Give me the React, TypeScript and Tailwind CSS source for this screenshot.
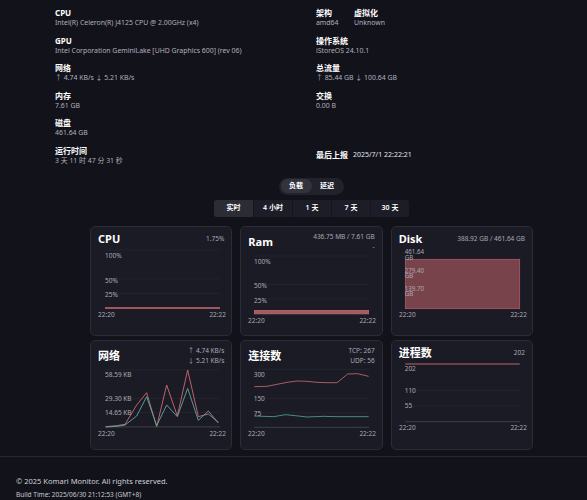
import React from "react";

const LBL = "#a9a9b3";
const GRID = "#2a2a36";
const RED = "#cf6a70";
const TEAL = "#5fa8a2";

type T = { x: number; y: number; s: string; anchor?: "start" | "end" | "middle" };
function Txt({ x, y, s, anchor = "start" }: T) {
  return (
    <text x={x} y={y} fontSize={6.5} fill={LBL} dominantBaseline="central" textAnchor={anchor}>
      {s}
    </text>
  );
}

function Txt2({ x, y, a, b }: { x: number; y: number; a: string; b: string }) {
  return (
    <text x={x} y={y} fontSize={6.2} fill={LBL} dominantBaseline="central">
      <tspan x={x} y={y}>{a}</tspan>
      <tspan x={x} y={y + 5.2}>{b}</tspan>
    </text>
  );
}

function XLabels({ y }: { y: number }) {
  return (
    <>
      <Txt x={0} y={y} s="22:20" />
      <Txt x={128} y={y} s="22:22" anchor="end" />
    </>
  );
}

function Grid({ ys, x1 = 7, x2 = 122 }: { ys: number[]; x1?: number; x2?: number }) {
  return (
    <>
      {ys.map((y, i) => (
        <line key={i} x1={x1} x2={x2} y1={y} y2={y} stroke={GRID} strokeWidth={0.6} />
      ))}
    </>
  );
}

function pts(a: number[][]) {
  return a.map((p) => p.join(",")).join(" ");
}

function Card({
  title,
  right,
  headerH,
  children,
}: {
  title: string;
  right: React.ReactNode;
  headerH: string;
  children: React.ReactNode;
}) {
  return (
    <div className="h-[110px] rounded-[5px] border border-[#2c2c38] bg-[#1b1b25] px-[7px] pt-[4px]">
      <div className={`flex items-center justify-between ${headerH}`}>
        <span className="text-[11px] font-bold leading-[14px] text-white">{title}</span>
        <div className="text-right text-[6.5px] leading-[10px] text-[#a9a9b3]">{right}</div>
      </div>
      <svg width={128} height={72} className="block overflow-visible">
        {children}
      </svg>
    </div>
  );
}

function InfoItem({ label, value }: { label: string; value: string }) {
  return (
    <div>
      <div className="text-[8px] font-bold leading-[10px] text-white">{label}</div>
      <div className="text-[6.9px] leading-[9px] text-[#b0b0ba]">{value}</div>
    </div>
  );
}

export default function App() {
  const netRed = [
    [7.67, 58.67], [18.67, 57.67], [27, 56.33], [38.67, 37], [48.67, 24.67], [58.67, 58.67],
    [68.67, 17], [79.33, 48], [89.67, 2], [100.33, 48.67], [110.33, 46], [120.33, 54.33],
  ];
  const netTeal = [
    [7.67, 59], [18.67, 58.33], [27, 57], [38.67, 48], [48.67, 28.67], [58.67, 57.67],
    [68.67, 37], [79.33, 48.67], [89.67, 20.33], [100.33, 52.33], [110.33, 43], [120.33, 55],
  ];
  const connRed = [
    [6.33, 18.67], [19, 18.33], [29, 16.33], [39, 14.33], [49, 13], [59, 13.33], [69, 14.33],
    [79, 14.67], [89, 14.67], [99.67, 6], [109.67, 5.67], [120.67, 8.33],
  ];
  const connTeal = [
    [6.33, 48], [25.67, 48.67], [37.33, 46.67], [47.33, 47.67], [59, 49], [75.67, 48.33],
    [89, 48.67], [105.67, 48.67], [120.67, 48.67],
  ];

  return (
    <div className="min-h-[500px] w-full bg-[#12121b] font-['Noto_Sans','Noto_Sans_CJK_SC',sans-serif]">
      <div className="ml-[55px] w-[513px]">
        {/* info */}
        <div className="grid grid-cols-[261px_1fr] pt-[8px]">
          <div className="h-[27.6px]"><InfoItem label="CPU" value="Intel(R) Celeron(R) J4125 CPU @ 2.00GHz (x4)" /></div>
          <div className="flex h-[27.6px]">
            <div className="w-[38px]"><InfoItem label="架构" value="amd64" /></div>
            <InfoItem label="虚拟化" value="Unknown" />
          </div>
          <div className="h-[27.6px]"><InfoItem label="GPU" value="Intel Corporation GeminiLake [UHD Graphics 600] (rev 06)" /></div>
          <div className="h-[27.6px]"><InfoItem label="操作系统" value="iStoreOS 24.10.1" /></div>
          <div className="h-[27.6px]"><InfoItem label="网络" value="↑ 4.74 KB/s ↓ 5.21 KB/s" /></div>
          <div className="h-[27.6px]"><InfoItem label="总流量" value="↑ 85.44 GB ↓ 100.64 GB" /></div>
          <div className="h-[27.6px]"><InfoItem label="内存" value="7.61 GB" /></div>
          <div className="h-[27.6px]"><InfoItem label="交换" value="0.00 B" /></div>
          <div className="h-[27.6px]"><InfoItem label="磁盘" value="461.64 GB" /></div>
          <div className="h-[27.6px]" />
          <div className="h-[27.6px]"><InfoItem label="运行时间" value="3 天 11 时 47 分 31 秒" /></div>
          <div className="flex h-[19px] items-center gap-[5px]">
            <span className="text-[8px] font-bold leading-[10px] text-white">最后上报</span>
            <span className="text-[7px] leading-[10px] text-[#e4e4ea]">2025/7/1 22:22:21</span>
          </div>
        </div>

        {/* tabs */}
        <div className="mt-[4px] flex justify-center">
          <div className="flex h-[17px] w-[65px] items-center rounded-full bg-[#22222c] p-[1.5px]">
            <div className="flex h-full w-[31px] items-center justify-center rounded-full bg-[#33333e] text-[7px] font-semibold text-white">负载</div>
            <div className="flex h-full flex-1 items-center justify-center text-[7px] font-semibold text-white">延迟</div>
          </div>
        </div>
        <div className="mt-[5px] flex justify-center">
          <div className="flex h-[17px] w-[195px] overflow-hidden rounded-[3px] bg-[#1d1d27]">
            <div className="flex w-[39px] items-center justify-center bg-[#2c2c37] text-[7px] font-semibold text-white">实时</div>
            <div className="flex w-[39px] items-center justify-center border-l border-[#15151d] text-[7px] font-semibold text-white">4 小时</div>
            <div className="flex w-[39px] items-center justify-center border-l border-[#15151d] text-[7px] font-semibold text-white">1 天</div>
            <div className="flex w-[39px] items-center justify-center border-l border-[#15151d] text-[7px] font-semibold text-white">7 天</div>
            <div className="flex w-[39px] items-center justify-center border-l border-[#15151d] text-[7px] font-semibold text-white">30 天</div>
          </div>
        </div>

        {/* cards */}
        <div className="mx-auto mt-[9px] grid w-[443px] grid-cols-3 gap-x-[8px] gap-y-[4px]">
          <Card title="CPU" headerH="h-[17px]" right="1.75%">
            <Grid ys={[2, 31, 45.5]} />
            <Txt x={7} y={7} s="100%" />
            <Txt x={7} y={32} s="50%" />
            <Txt x={7} y={46} s="25%" />
            <line x1={7} x2={122} y1={60} y2={60} stroke={RED} strokeWidth={1.6} />
            <XLabels y={66} />
          </Card>
          <Card
            title="Ram"
            headerH="h-[23px]"
            right={
              <>
                <div>436.75 MB / 7.61 GB</div>
                <div>-</div>
              </>
            }
          >
            <Grid ys={[2, 30.5, 45]} x1={6} x2={121} />
            <Txt x={6} y={7} s="100%" />
            <Txt x={6} y={31} s="50%" />
            <Txt x={6} y={46} s="25%" />
            <rect x={6.3} y={56.3} width={114.4} height={3.6} fill="#a35a60" stroke="#c8707a" strokeWidth={0.6} />
            <XLabels y={66.3} />
          </Card>
          <Card title="Disk" headerH="h-[17px]" right="388.92 GB / 461.64 GB">
            <rect x={6.3} y={11.3} width={114.4} height={49.4} fill="#8a4a52" fillOpacity={0.85} stroke="#b2626a" strokeWidth={0.7} />
            <Txt2 x={5.7} y={3.3} a="461.64" b="GB" />
            <Txt2 x={5.7} y={21.9} a="279.40" b="GB" />
            <Txt2 x={5.7} y={39.9} a="139.70" b="GB" />
            <XLabels y={66.3} />
          </Card>

          <Card
            title="网络"
            headerH="h-[23px]"
            right={
              <>
                <div>↑ 4.74 KB/s</div>
                <div>↓ 5.21 KB/s</div>
              </>
            }
          >
            <Grid ys={[1.9, 30.3, 44.5]} />
            <line x1={7} x2={122} y1={58.9} y2={58.9} stroke="#4a4a55" strokeWidth={0.8} />
            <Txt x={7} y={6} s="58.59 KB" />
            <Txt x={7} y={30.3} s="29.30 KB" />
            <Txt x={7} y={44.7} s="14.65 KB" />
            <polyline points={pts(netRed)} fill="none" stroke={RED} strokeWidth={0.9} strokeLinejoin="round" />
            <polyline points={pts(netTeal)} fill="none" stroke={TEAL} strokeWidth={0.9} strokeLinejoin="round" />
            <XLabels y={65.3} />
          </Card>
          <Card
            title="连接数"
            headerH="h-[23px]"
            right={
              <>
                <div>TCP: 267</div>
                <div>UDP: 56</div>
              </>
            }
          >
            <Grid ys={[1.3, 30.3, 44.8]} x1={6} x2={121} />
            <line x1={6} x2={121} y1={59.3} y2={59.3} stroke="#4a4a55" strokeWidth={0.8} />
            <Txt x={5.7} y={6} s="300" />
            <Txt x={5.7} y={30.3} s="150" />
            <Txt x={5.7} y={45.3} s="75" />
            <polyline points={pts(connRed)} fill="none" stroke="#b8626a" strokeWidth={0.9} strokeLinejoin="round" />
            <polyline points={pts(connTeal)} fill="none" stroke="#4f9690" strokeWidth={0.9} strokeLinejoin="round" />
            <XLabels y={65.3} />
          </Card>
          <Card title="进程数" headerH="h-[17px]" right="202">
            <Grid ys={[28.3, 44]} x1={6} x2={121} />
            <line x1={6} x2={121} y1={59.7} y2={59.7} stroke="#4a4a55" strokeWidth={0.8} />
            <line x1={6.3} x2={120.7} y1={2} y2={2} stroke="#8a4c56" strokeWidth={1.4} />
            <Txt x={5.7} y={6.3} s="202" />
            <Txt x={5.7} y={28.7} s="110" />
            <Txt x={5.7} y={43.7} s="55" />
            <XLabels y={65.3} />
          </Card>
        </div>
      </div>

      {/* footer */}
      <div className="mt-[6px] border-t border-[#262634] px-[16px] pt-[19px] pb-[4px]">
        <div className="text-[7.5px] leading-[10px] text-[#d0d0d8]">© 2025 Komari Monitor. All rights reserved.</div>
        <div className="mt-[4px] text-[6.5px] leading-[9px] text-[#c8c8d0]">Build Time: 2025/06/30 21:12:53 (GMT+8)</div>
      </div>
    </div>
  );
}
